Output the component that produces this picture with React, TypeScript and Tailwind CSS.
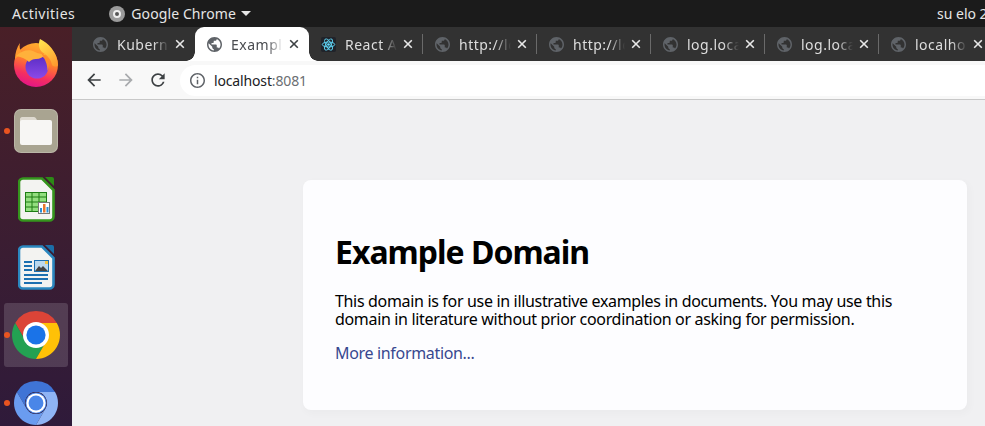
import React from "react";

const tabs = [
  { title: "Kubernetes", icon: "globe" },
  { title: "Example Domain", icon: "globe", active: true },
  { title: "React App", icon: "react" },
  { title: "http://localhost", icon: "globe" },
  { title: "http://localhost", icon: "globe" },
  { title: "log.localhost", icon: "globe" },
  { title: "log.localhost", icon: "globe" },
  { title: "localhost:3000", icon: "globe" },
];

function Globe({ color = "#5f6368" }: { color?: string }) {
  return (
    <svg width="15" height="15" viewBox="2 2 20 20" className="shrink-0">
      <path
        fill={color}
        d="M12 2C6.48 2 2 6.48 2 12s4.48 10 10 10 10-4.48 10-10S17.52 2 12 2zm-1 17.93c-3.95-.49-7-3.85-7-7.93 0-.62.08-1.21.21-1.79L9 15v1c0 1.1.9 2 2 2v1.93zm6.9-2.54c-.26-.81-1-1.39-1.9-1.39h-1v-3c0-.55-.45-1-1-1H8v-2h2c.55 0 1-.45 1-1V7h2c1.1 0 2-.9 2-2v-.41c2.93 1.19 5 4.06 5 7.41 0 2.08-.8 3.97-2.1 5.39z"
      />
    </svg>
  );
}

function ReactIcon() {
  return (
    <svg width="15" height="15" viewBox="0 0 18 18" className="shrink-0">
      <rect width="18" height="18" rx="2" fill="#20232a" />
      <g fill="none" stroke="#61dafb" strokeWidth="1.1">
        <ellipse cx="9" cy="9" rx="7.5" ry="3" />
        <ellipse cx="9" cy="9" rx="7.5" ry="3" transform="rotate(60 9 9)" />
        <ellipse cx="9" cy="9" rx="7.5" ry="3" transform="rotate(120 9 9)" />
      </g>
      <circle cx="9" cy="9" r="1.6" fill="#61dafb" />
    </svg>
  );
}

function CloseIcon({ color }: { color: string }) {
  return (
    <svg width="10" height="10" viewBox="0 0 10 10" className="shrink-0">
      <path d="M1.2 1.2l7.6 7.6M8.8 1.2L1.2 8.8" stroke={color} strokeWidth="1.6" />
    </svg>
  );
}

function Tab({ title, icon, active, last }: { title: string; icon: string; active?: boolean; last?: boolean }) {
  return (
    <div
      className={`relative flex h-[34px] w-[114px] shrink-0 items-center pl-[12px] ${
        active ? "rounded-t-[9px] bg-white text-[#4a4c50]" : "text-[#dedede]"
      }`}
    >
      {active && (
        <>
          <div className="absolute bottom-0 left-[-9px] h-[9px] w-[9px] bg-[radial-gradient(circle_at_0_0,transparent_8.5px,white_9px)]" />
          <div className="absolute bottom-0 right-[-9px] h-[9px] w-[9px] bg-[radial-gradient(circle_at_100%_0,transparent_8.5px,white_9px)]" />
        </>
      )}
      {icon === "react" ? <ReactIcon /> : <Globe />}
      <span className="ml-[9px] w-[52px] overflow-hidden whitespace-nowrap text-[14px] tracking-[0.5px] [mask-image:linear-gradient(to_right,black_70%,transparent)]">
        {title}
      </span>
      <span className="ml-[5px] flex w-[12px] justify-center">
        <CloseIcon color={active ? "#3c4043" : "#e8e8e8"} />
      </span>
      {!last && !active && <div className="absolute right-0 top-[7px] h-[20px] w-px bg-[#6a6a6a]" />}
    </div>
  );
}

function Firefox() {
  return (
    <svg width="46" height="48" viewBox="0 0 46 48">
      <defs>
        <linearGradient id="ffa" x1="0.7" y1="0" x2="0.4" y2="1">
          <stop offset="0" stopColor="#ffb52e" />
          <stop offset="0.45" stopColor="#ff7a2e" />
          <stop offset="0.75" stopColor="#f5305f" />
          <stop offset="1" stopColor="#e31587" />
        </linearGradient>
        <linearGradient id="ffb" x1="0.5" y1="0" x2="0.5" y2="1">
          <stop offset="0" stopColor="#5a2cc4" />
          <stop offset="1" stopColor="#8b4ae8" />
        </linearGradient>
        <linearGradient id="ffc" x1="0.3" y1="0" x2="0.8" y2="1">
          <stop offset="0" stopColor="#ffe14d" />
          <stop offset="1" stopColor="#ff9a2e" />
        </linearGradient>
      </defs>
      <circle cx="23" cy="26" r="22" fill="url(#ffa)" />
      <path d="M27 0c8 4 17 12 18 26-1 2-4 2-6 0-1-6-5-10-10-13-3-3-4-8-2-13z" fill="url(#ffc)" />
      <path d="M7 4c-1 4 0 7 2 10L2 20C2 14 4 8 7 4z" fill="#ff9a2e" />
      <circle cx="24" cy="28" r="11.5" fill="url(#ffb)" />
      <path d="M3 17C9 11 17 10 22 13c4 2 8 2 11 2-3 3-6 5-10 5-3 0-5 1-7 3-3-3-7-5-13-6z" fill="#ffb13b" />
      <path d="M28 14c5 2 8 7 8 12 0 2-.5 4-1.500 6 0-7-2.500-12-6.500-18z" fill="#ff8a2a" />
    </svg>
  );
}

function Files() {
  return (
    <div className="flex h-[44px] w-[44px] items-center justify-center rounded-[7px] bg-[#a9a491] shadow-[inset_0_0_0_1px_rgba(255,255,255,0.2)]">
      <svg width="32" height="28" viewBox="0 0 32 28">
        <path d="M2 0h12c1 0 2 1 3 3l1 2H0V2c0-1 1-2 2-2z" fill="#dedad0" />
        <rect y="3" width="32" height="25" rx="2" fill="#f7f6f4" />
      </svg>
    </div>
  );
}

function Calc() {
  return (
    <svg width="37" height="45" viewBox="0 0 37 45">
      <path d="M27 0h7a2 2 0 0 1 2 2v7z" fill="#2c8a16" />
      <path d="M5 1.500h19L35.500 13v26.500a4 4 0 0 1-4 4H5a4 4 0 0 1-4-4V5.500a4 4 0 0 1 4-4z" fill="#f3f3f1" stroke="#35951d" strokeWidth="2.6" />
      <rect x="7" y="15" width="22" height="20" fill="#93de7f" />
      <g stroke="#1e7d14" strokeWidth="1" fill="none">
        <path d="M7.500 15v20M14 15v20M21 15v20M28.500 15v20M7 15.500h22M7 20h22M7 25h22M7 30h22M7 34.500h22" />
      </g>
      <rect x="20.500" y="25.500" width="11" height="11" fill="#fff" stroke="#777" />
      <rect x="22" y="31" width="2" height="4.500" fill="#2a8fd8" />
      <rect x="25" y="27" width="2.500" height="8.500" fill="#e8762d" />
      <rect x="28.500" y="30" width="2" height="5.500" fill="#2a8fd8" />
    </svg>
  );
}

function Writer() {
  return (
    <svg width="37" height="45" viewBox="0 0 37 45">
      <path d="M27 0h7a2 2 0 0 1 2 2v7z" fill="#1b6ea8" />
      <path d="M5 1.500h19L35.500 13v26.500a4 4 0 0 1-4 4H5a4 4 0 0 1-4-4V5.500a4 4 0 0 1 4-4z" fill="#f3f3f1" stroke="#2a87bf" strokeWidth="2.6" />
      <g fill="#1c6fb0">
        <rect x="6" y="16" width="8" height="2" />
        <rect x="6" y="20" width="8" height="2" />
        <rect x="6" y="24" width="8" height="2" />
        <rect x="6" y="29" width="24" height="2" />
        <rect x="6" y="33" width="24" height="2" />
        <rect x="6" y="37" width="18" height="2" />
      </g>
      <rect x="16.500" y="15.500" width="14" height="11" fill="#bcd9ee" stroke="#1c6fb0" />
      <path d="M17 26l4-5 2 2 2-2 5 5z" fill="#444" />
      <rect x="27" y="16" width="3" height="3" fill="#f5c542" />
    </svg>
  );
}

function Chrome({ size, muted }: { size: number; muted?: boolean }) {
  const red = muted ? "#3f74d6" : "#db4437";
  const green = muted ? "#6a9cf0" : "#23a152";
  const yellow = muted ? "#8fb4f5" : "#ffc107";
  const ball = muted ? "#4a86e8" : "#1a73e8";
  const ring = muted ? 10.5 : 12;
  return (
    <svg width={size} height={size} viewBox="0 0 48 48">
      <path d="M24 0A24 24 0 0 1 44.780 12H24A12 12 0 0 0 13.600 30L3.220 12A24 24 0 0 1 24 0z" fill={red} />
      <path d="M3.220 12L13.600 30A12 12 0 0 0 34.400 30L24 48A24 24 0 0 1 3.220 12z" fill={green} />
      <path d="M44.780 12A24 24 0 0 1 24 48L34.400 30A12 12 0 0 0 24 12z" fill={yellow} />
      <circle cx="24" cy="24" r={ring + 1} fill={muted ? ball : "#fff"} />
      <circle cx="24" cy="24" r={ring} fill="#fff" />
      <circle cx="24" cy="24" r={ring - 2.4} fill={ball} />
    </svg>
  );
}

function DockItem({ children, dot, active }: { children: React.ReactNode; dot?: boolean; active?: boolean }) {
  return (
    <div className="relative flex h-[68px] w-[72px] shrink-0 items-center justify-center">
      <div className={`flex h-[64px] w-[64px] items-center justify-center rounded-[3px] ${active ? "bg-white/15" : ""}`}>
        {children}
      </div>
      {dot && <div className="absolute left-[4px] top-[31px] h-[6px] w-[6px] rounded-full bg-[#e95420]" />}
    </div>
  );
}

export default function App() {
  return (
    <div className="flex h-[426px] w-[985px] flex-col overflow-hidden bg-[#f0f0f2] font-['Noto_Sans',sans-serif]">
      {/* gnome top bar */}
      <div className="flex h-[27px] shrink-0 items-center whitespace-nowrap bg-[#1b1b1b] text-[14px] text-[#e6e6e6]">
        <span className="ml-[12px] shrink-0 tracking-[0.5px]">Activities</span>
        <div className="ml-[34px] flex h-[16px] w-[16px] shrink-0 items-center justify-center rounded-full bg-[#9b9b9b]">
          <div className="h-[8px] w-[8px] rounded-full border-2 border-[#eee] bg-[#555]" />
        </div>
        <span className="ml-[6px] shrink-0 tracking-[0.1px]">Google Chrome</span>
        <div className="ml-[5px] h-0 w-0 shrink-0 border-x-[5px] border-t-[5px] border-x-transparent border-t-[#e6e6e6]" />
        <span className="ml-[686px] shrink-0">su elo 2</span>
      </div>

      <div className="flex min-h-0 flex-1">
        {/* dock */}
        <div className="flex w-[72px] shrink-0 flex-col overflow-hidden bg-gradient-to-b from-[#491f27] to-[#2f1a3a] pt-[2px]">
          <DockItem><Firefox /></DockItem>
          <DockItem dot><Files /></DockItem>
          <DockItem><Calc /></DockItem>
          <DockItem><Writer /></DockItem>
          <DockItem dot active><Chrome size={48} /></DockItem>
          <DockItem dot><Chrome size={44} muted /></DockItem>
        </div>

        {/* browser */}
        <div className="flex min-w-0 flex-1 flex-col overflow-hidden">
          <div className="flex h-[34px] shrink-0 bg-[#323232] pl-[9px]">
            {tabs.map((t, i) => (
              <Tab key={i} title={t.title} icon={t.icon} active={t.active} last={i === 0} />
            ))}
          </div>
          <div className="flex h-[39px] shrink-0 items-center border-b border-[#c8c8c8] bg-[#f8f8f8]">
            <svg width="20" height="20" viewBox="0 0 24 24" className="ml-[12px]">
              <path fill="#3c4043" d="M20 11H7.830l5.590-5.590L12 4l-8 8 8 8 1.410-1.410L7.830 13H20v-2z" />
            </svg>
            <svg width="20" height="20" viewBox="0 0 24 24" className="ml-[12px]">
              <path fill="#a8aaad" d="M4 11h12.170l-5.590-5.590L12 4l8 8-8 8-1.410-1.410L16.170 13H4v-2z" />
            </svg>
            <svg width="20" height="20" viewBox="0 0 24 24" className="ml-[12px]">
              <path fill="#3c4043" d="M17.650 6.350A7.958 7.958 0 0012 4c-4.420 0-7.990 3.580-7.990 8s3.570 8 7.990 8c3.730 0 6.840-2.550 7.730-6h-2.080A5.990 5.990 0 0112 18c-3.310 0-6-2.690-6-6s2.690-6 6-6c1.660 0 3.140.690 4.220 1.780L13 11h7V4l-2.350 2.350z" />
            </svg>
            <div className="ml-[12px] flex h-[31px] flex-1 items-center rounded-l-[16px] bg-white pl-[10px]">
              <svg width="15" height="15" viewBox="2 2 20 20">
                <path fill="#5f6368" d="M11 7h2v2h-2zm0 4h2v6h-2zm1-9C6.480 2 2 6.480 2 12s4.480 10 10 10 10-4.480 10-10S17.520 2 12 2zm0 18c-4.410 0-8-3.590-8-8s3.590-8 8-8 8 3.590 8 8-3.590 8-8 8z" />
              </svg>
              <span className="ml-[9px] text-[14px] tracking-[-0.15px] text-[#202124]">
                localhost<span className="text-[#6b6e72]">:8081</span>
              </span>
            </div>
          </div>

          {/* page */}
          <div className="flex-1 overflow-hidden pl-[231px] pt-[80px]">
            <div className="h-[230px] w-[664px] rounded-[8px] bg-[#fdfdff] p-[32px] text-[16px] leading-[18px] tracking-[-0.33px] text-black shadow-[2px_3px_7px_2px_rgba(0,0,0,0.02)]">
              <h1 className="mt-[21px] text-[32px] font-bold leading-[37px] tracking-[-1px]">Example Domain</h1>
              <p className="mt-[22px]">
                This domain is for use in illustrative examples in documents. You may use this domain in literature without prior coordination or asking for permission.
              </p>
              <p className="mt-[16px]">
                <a href="#" className="text-[#38488f]">More information...</a>
              </p>
            </div>
          </div>
        </div>
      </div>
    </div>
  );
}
